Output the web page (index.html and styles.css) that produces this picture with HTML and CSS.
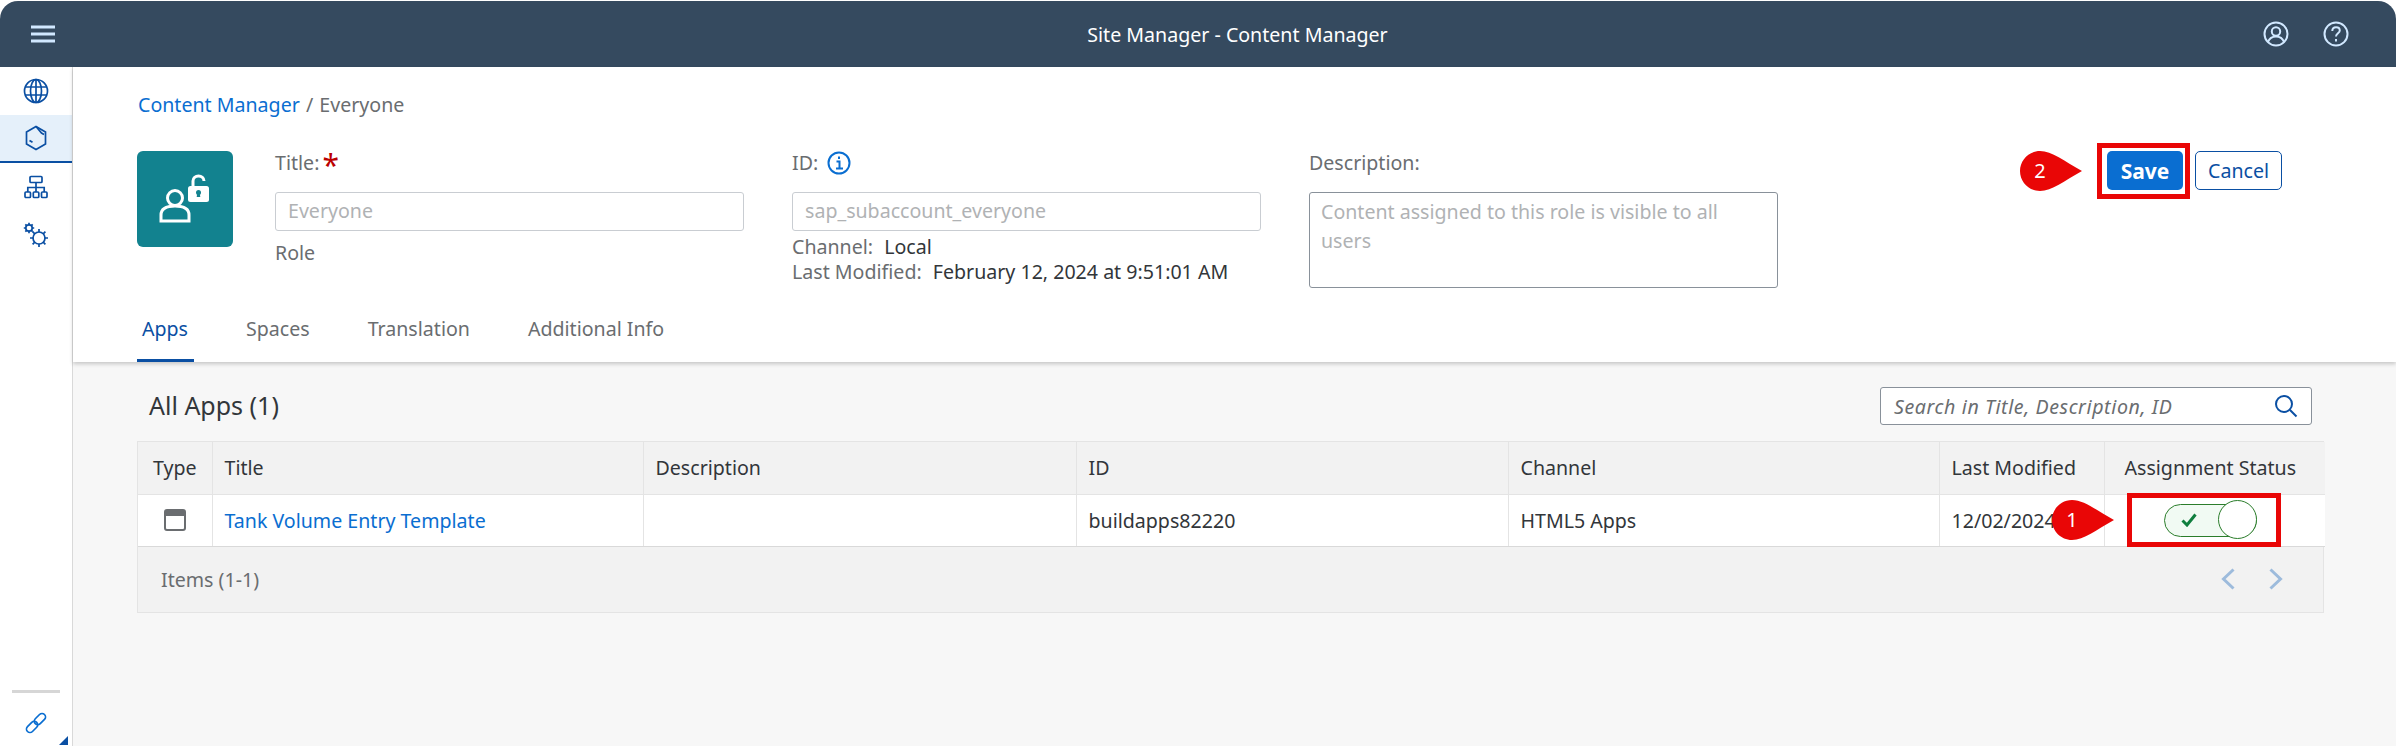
FILE: index.html
```html
<!DOCTYPE html>
<html lang="en">
<head>
  <meta charset="UTF-8">
  <title>Site Manager - Content Manager</title>
  <link rel="stylesheet" href="styles.css">
</head>
<body>
  <div class="shell">
    <header class="topbar">
      <svg class="menu-icon" width="26" height="18" viewBox="0 0 26 18"><path d="M1 2h24M1 9h24M1 16h24"/></svg>
      <div class="topbar-title">Site Manager - Content Manager</div>
      <div class="topbar-icons">
        <svg width="26" height="26" viewBox="0 0 26 26"><circle cx="13" cy="13" r="11.5"/><circle cx="13" cy="10.5" r="4.2"/><path d="M5 21c1.5-4 4.5-5.500 8-5.500s6.500 1.500 8 5.500"/></svg>
        <svg width="26" height="26" viewBox="0 0 26 26"><circle cx="13" cy="13" r="11.500"/><path d="M9.300 10c0-2.400 1.700-3.800 3.800-3.800s3.700 1.300 3.700 3.300c0 2.800-3.800 2.900-3.800 6"/><path d="M13 18v2.500"/></svg>
      </div>
    </header>

    <div class="main">
      <nav class="sidebar">
        <div class="nav-item">
          <svg width="26" height="26" viewBox="0 0 26 26"><circle cx="13" cy="13" r="11.500"/><ellipse cx="13" cy="13" rx="5.500" ry="11.500"/><path d="M13 1.500v23M2.500 9h21M2.500 17h21"/></svg>
        </div>
        <div class="nav-item nav-item-active">
          <svg width="22" height="26" viewBox="0 0 22 26"><path d="M11 1.500l9.500 5.500v12L11 24.500 1.500 19V7z"/><path d="M11 1.500 16.500 8 19 9.500"/><path d="M4.500 15.500l3 1.800"/></svg>
        </div>
        <div class="nav-item">
          <svg width="24" height="24" viewBox="0 0 24 24"><rect x="6" y="1.500" width="12" height="6" rx="1"/><rect x="1" y="17" width="5.500" height="5.500" rx="1"/><rect x="9.300" y="17" width="5.500" height="5.500" rx="1"/><rect x="17.500" y="17" width="5.500" height="5.500" rx="1"/><path d="M12 7.500V17M3.800 17v-4.500h16.400V17"/></svg>
        </div>
        <div class="nav-item">
          <svg width="26" height="26" viewBox="0 0 26 26"><circle cx="6" cy="6" r="3.200"/><path d="M6 .8v2M6 9.200v2M.8 6h2M9.200 6h2M2.300 2.300l1.400 1.400M8.300 8.300l1.400 1.400M9.700 2.300 8.300 3.700M3.700 8.300 2.300 9.700"/><circle cx="16" cy="16" r="6" stroke-width="3"/><path d="M16 7v3M16 22v3M7 16h3M22 16h3M9.600 9.600l2.200 2.200M20.200 20.200l2.200 2.200M22.400 9.600l-2.200 2.200M11.800 20.200l-2.200 2.200" stroke-width="3"/></svg>
        </div>
        <div class="sidebar-bottom">
          <div class="sidebar-rule"></div>
          <svg class="link-icon" width="22" height="22" viewBox="0 0 22 22"><g transform="rotate(-45 11 11)"><rect x="-1" y="7.500" width="13" height="7" rx="3.500"/><rect x="10" y="7.500" width="13" height="7" rx="3.500"/></g></svg>
          <div class="corner-mark"></div>
        </div>
      </nav>

      <div class="content">
        <section class="page-head">
          <div class="breadcrumb"><a class="link">Content Manager</a> <span class="crumb-sep">/</span> <span>Everyone</span></div>
          <div class="head-row">
            <div class="avatar">
              <svg width="52" height="50" viewBox="0 0 52 50"><circle cx="16" cy="24" r="7.500" class="av-line"/><path d="M2 47V41c0-6 5-9 14-9s14 3 14 9v6z" class="av-line"/><rect x="29" y="12" width="21" height="16" rx="2.500" class="av-fill"/><path d="M34 12V7c0-3 2.500-5 5.500-5s5.500 2 5.500 5" class="av-line"/><circle cx="39.500" cy="18.500" r="2.500" class="av-hole"/><path d="M38.300 19h2.400l.6 4h-3.600z" class="av-hole"/></svg>
            </div>
            <div class="field">
              <div class="field-label">Title:<span class="required">*</span></div>
              <div class="input">Everyone</div>
              <div class="role">Role</div>
            </div>
            <div class="field">
              <div class="field-label">ID:
                <svg class="info-icon" width="24" height="24" viewBox="0 0 24 24"><circle cx="12" cy="12" r="10.500"/><path d="M9.500 10.500H12.500V17.500M9 17.500H16"/><path d="M12 5.500V8"/></svg>
              </div>
              <div class="input">sap_subaccount_everyone</div>
              <div class="meta"><span class="meta-key">Channel:</span> Local</div>
              <div class="meta"><span class="meta-key">Last Modified:</span> February 12, 2024 at 9:51:01 AM</div>
            </div>
            <div class="field">
              <div class="field-label">Description:</div>
              <div class="input textarea">Content assigned to this role is visible to all users</div>
            </div>
            <div class="actions">
              <button class="btn btn-primary">Save</button>
              <button class="btn btn-plain">Cancel</button>
              <div class="mark-box mark-save"></div>
              <div class="callout callout-save">
                <svg width="62" height="40" viewBox="0 0 62 40"><path d="M20 0C32 0 44 10 62 20 44 30 32 40 20 40 9 40 0 31 0 20S9 0 20 0z"/></svg>
                <span>2</span>
              </div>
            </div>
          </div>
          <div class="tabs">
            <div class="tab tab-active">Apps</div>
            <div class="tab">Spaces</div>
            <div class="tab">Translation</div>
            <div class="tab">Additional Info</div>
          </div>
        </section>

        <section class="apps">
          <div class="apps-head">
            <h2>All Apps (1)</h2>
            <div class="search">
              <span>Search in Title, Description, ID</span>
              <svg width="24" height="24" viewBox="0 0 24 24"><circle cx="10" cy="10" r="8"/><path d="M16 16l6.500 6.500" stroke-width="3"/></svg>
            </div>
          </div>
          <div class="table-wrap">
            <table>
              <thead>
                <tr>
                  <th class="col-type">Type</th>
                  <th class="col-title">Title</th>
                  <th class="col-desc">Description</th>
                  <th class="col-id">ID</th>
                  <th class="col-channel">Channel</th>
                  <th class="col-mod">Last Modified</th>
                  <th class="col-status">Assignment Status</th>
                </tr>
              </thead>
              <tbody>
                <tr>
                  <td class="cell-center">
                    <svg class="type-icon" width="22" height="22" viewBox="0 0 22 22"><rect x="1" y="1" width="20" height="20" rx="2" class="win-frame"/><rect x="1" y="1" width="20" height="6" class="win-bar"/></svg>
                  </td>
                  <td><a class="link">Tank Volume Entry Template</a></td>
                  <td></td>
                  <td>buildapps82220</td>
                  <td>HTML5 Apps</td>
                  <td>12/02/2024</td>
                  <td class="cell-center">
                    <div class="switch">
                      <svg width="16" height="14" viewBox="0 0 16 14"><path d="M1.500 7.500 6 12l8.500-10.500"/></svg>
                      <div class="switch-knob"></div>
                    </div>
                  </td>
                </tr>
              </tbody>
            </table>
            <div class="table-foot">
              <span>Items (1-1)</span>
              <div class="pager">
                <svg width="14" height="22" viewBox="0 0 14 22"><path d="M12.500 1.500 2.500 11l10 9.500"/></svg>
                <svg width="14" height="22" viewBox="0 0 14 22"><path d="M1.500 1.500 11.500 11l-10 9.500"/></svg>
              </div>
            </div>
            <div class="mark-box mark-switch"></div>
            <div class="callout callout-switch">
              <svg width="62" height="40" viewBox="0 0 62 40"><path d="M20 0C32 0 44 10 62 20 44 30 32 40 20 40 9 40 0 31 0 20S9 0 20 0z"/></svg>
              <span>1</span>
            </div>
          </div>
        </section>
      </div>
    </div>
  </div>
</body>
</html>
```

FILE: styles.css
```css
* {
  box-sizing: border-box;
}
html, body {
  margin: 0;
  height: 100%;
  background: #fff;
}
body {
  font-family: "Noto Sans", sans-serif;
  font-size: 19.6px;
  color: #32363a;
  overflow: hidden;
}
.shell {
  height: 746px;
  padding-top: 1px;
  display: flex;
  flex-direction: column;
}
.link {
  color: #0a6ed1;
}

/* top bar */
.topbar {
  height: 66px;
  flex: none;
  background: #354a5f;
  border-radius: 18px 18px 0 0;
  display: flex;
  align-items: center;
  justify-content: space-between;
  padding: 0 47px 0 30px;
  position: relative;
}
.menu-icon path {
  stroke: #d1e8ff;
  stroke-width: 3;
}
.topbar-title {
  color: #fff;
  flex: 1;
  padding-left: 156px;
  text-align: center;
}
.topbar-icons {
  display: flex;
  gap: 34px;
}
.topbar-icons svg * {
  fill: none;
  stroke: #d1e8ff;
  stroke-width: 2;
}

/* side nav */
.main {
  flex: 1;
  display: flex;
  min-height: 0;
}
.sidebar {
  width: 73px;
  flex: none;
  background: #fff;
  border-right: 1px solid #d9d9d9;
  display: flex;
  flex-direction: column;
  padding-top: 0;
}
.nav-item {
  height: 48px;
  display: flex;
  align-items: center;
  justify-content: center;
}
.nav-item svg * {
  fill: none;
  stroke: #0a4fa3;
  stroke-width: 1.700;
}
.nav-item-active {
  background: #e5f0fa;
  border-bottom: 2px solid #0a4fa3;
}
.sidebar-bottom {
  margin-top: auto;
  height: 56px;
  border-radius: 0 0 0 14px;
  display: flex;
  flex-direction: column;
  align-items: center;
  position: relative;
}
.sidebar-rule {
  width: 48px;
  height: 3px;
  background: #d6d6d6;
}
.link-icon {
  margin-top: 19px;
}
.link-icon rect {
  fill: none;
  stroke: #0a6ed1;
  stroke-width: 1.700;
}
.corner-mark {
  position: absolute;
  right: 4px;
  bottom: 1px;
  border-style: solid;
  border-width: 0 0 9px 9px;
  border-color: transparent transparent #0a4fa3 transparent;
}

/* page head */
.content {
  flex: 1;
  min-width: 0;
  background: #f7f7f7;
  display: flex;
  flex-direction: column;
}
.page-head {
  height: 295px;
  flex: none;
  background: #fff;
  box-shadow: 0 2px 4px rgba(0, 0, 0, 0.2);
  padding: 25px 114px 0 64px;
  position: relative;
}
.breadcrumb {
  height: 26px;
  line-height: 26px;
  padding-left: 1px;
  color: #6a6d70;
}
.crumb-sep {
  margin: 0 1px;
}
.head-row {
  display: flex;
  margin-top: 33px;
  height: 145px;
}
.avatar {
  width: 96px;
  height: 96px;
  flex: none;
  background: #12828f;
  border-radius: 6px;
  margin-right: 42px;
  display: flex;
  align-items: center;
  justify-content: center;
}
.av-line {
  fill: none;
  stroke: #fff;
  stroke-width: 3;
}
.av-fill {
  fill: #fff;
}
.av-hole {
  fill: #12828f;
}
.field {
  width: 469px;
  margin-right: 48px;
  flex: none;
}
.field-label {
  height: 24px;
  line-height: 24px;
  margin-bottom: 17px;
  color: #6a6d70;
  display: flex;
  gap: 9px;
  align-items: center;
}
.required {
  color: #bb0000;
  font-size: 30px;
  margin-left: -6px;
  height: 24px;
  line-height: 28px;
}
.info-icon * {
  fill: none;
  stroke: #0a6ed1;
  stroke-width: 2;
}
.input {
  height: 39px;
  background: #fff;
  border: 1px solid #c9cdd2;
  border-radius: 3px;
  padding: 0 12px;
  line-height: 36px;
  color: #b0b2b4;
}
.textarea {
  height: 96px;
  border-color: #89919a;
  line-height: 29px;
  padding: 4px 11px;
}
.role {
  margin-top: 9px;
  line-height: 26px;
  color: #6a6d70;
}
.meta {
  line-height: 24.5px;
  color: #32363a;
}
.input + .meta {
  margin-top: 4px;
}
.meta-key {
  color: #6a6d70;
  margin-right: 6px;
}
.actions {
  margin-left: auto;
  display: flex;
  gap: 12px;
  align-items: flex-start;
  position: relative;
}
.btn {
  height: 39px;
  border-radius: 5px;
  font: inherit;
  padding: 0;
}
.btn-primary {
  width: 76px;
  background: #0a6ed1;
  border: 0;
  color: #fff;
  font-weight: 700;
  font-size: 21px;
}
.btn-plain {
  width: 87px;
  background: #fff;
  border: 1px solid #0a4fa3;
  color: #0a4fa3;
}

/* tabs */
.tabs {
  display: flex;
  gap: 58px;
  padding: 0 5px;
  height: 66px;
}
.tab {
  line-height: 66px;
  color: #6a6d70;
  position: relative;
}
.tab-active {
  color: #0a4fa3;
}
.tab-active::after {
  content: "";
  position: absolute;
  left: -5px;
  right: -6px;
  bottom: 0;
  height: 3px;
  background: #0a4fa3;
}

/* apps table */
.apps {
  padding: 25px 72px 0 64px;
}
.apps-head {
  display: flex;
  justify-content: space-between;
  align-items: center;
  height: 38px;
  padding: 0 12px;
  margin-bottom: 17px;
}
.apps-head h2 {
  margin: -2px 0 0;
  font-size: 25px;
  font-weight: 400;
  color: #32363a;
}
.search {
  width: 432px;
  height: 38px;
  background: #fff;
  border: 1px solid #89919a;
  border-radius: 3px;
  display: flex;
  align-items: center;
  justify-content: space-between;
  padding: 0 13px;
  font-style: italic;
  letter-spacing: 0.6px;
  color: #6a6d70;
}
.search svg * {
  fill: none;
  stroke: #0a4fa3;
  stroke-width: 2;
}
.table-wrap {
  position: relative;
  width: 2187px;
  background: #f2f2f2;
  border: 1px solid #e4e4e4;
  border-top-width: 0;
  box-shadow: 0 -1px 0 #e4e4e4;
}
table {
  width: 100%;
  table-layout: fixed;
  border-collapse: collapse;
}
th, td {
  height: 52px;
  padding: 0 12px;
  text-align: left;
  font-weight: 400;
  border-right: 1px solid #e4e4e4;
  color: #32363a;
}
th:last-child, td:last-child {
  border-right: 0;
}
th {
  background: #f2f2f2;
  border-bottom: 1px solid #e4e4e4;
}
td {
  background: #fff;
  border-bottom: 1px solid #d9d9d9;
}
.col-type { width: 74px; text-align: center; padding: 0; }
.col-title { width: 431px; }
.col-desc { width: 433px; }
.col-id { width: 432px; }
.col-channel { width: 431px; }
.col-mod { width: 165px; }
.col-status { width: 221px; padding: 0 0 0 20px; }
.cell-center {
  text-align: center;
  padding: 0;
}
.type-icon {
  display: block;
  margin: 0 auto;
}
.win-frame {
  fill: #fff;
  stroke: #6a6d70;
  stroke-width: 2;
}
.win-bar {
  fill: #6a6d70;
}
.switch {
  width: 93px;
  height: 33px;
  margin: 0 0 0 59px;
  border: 1px solid #2b7d2b;
  border-radius: 17px;
  background: #f1faf3;
  position: relative;
  display: flex;
  align-items: center;
  padding-left: 16px;
}
.switch svg path {
  fill: none;
  stroke: #107e3e;
  stroke-width: 3;
}
.switch-knob {
  position: absolute;
  right: -1px;
  top: -5px;
  width: 39px;
  height: 39px;
  border-radius: 50%;
  background: #fff;
  border: 1px solid #2b7d2b;
}
.table-foot {
  height: 65px;
  display: flex;
  align-items: center;
  justify-content: space-between;
  padding: 0 40px 0 23px;
  color: #6a6d70;
}
.pager {
  display: flex;
  gap: 34px;
}
.pager svg path {
  fill: none;
  stroke: #9dbbdc;
  stroke-width: 3;
}

/* red annotations */
.mark-box {
  position: absolute;
  border: 5px solid #e90606;
  background: transparent;
}
.mark-save {
  left: -10px;
  top: -8px;
  width: 93px;
  height: 56px;
}
.mark-switch {
  left: 1989px;
  top: 51px;
  width: 154px;
  height: 54px;
}
.callout {
  position: absolute;
  width: 62px;
  height: 40px;
}
.callout svg {
  display: block;
}
.callout svg path {
  fill: #e90606;
}
.callout span {
  position: absolute;
  left: 0;
  top: 0;
  width: 40px;
  line-height: 40px;
  text-align: center;
  color: #fff;
  font-size: 20px;
}
.callout-save {
  left: -87px;
  top: 0;
}
.callout-switch {
  left: 1914px;
  top: 58px;
}
```
